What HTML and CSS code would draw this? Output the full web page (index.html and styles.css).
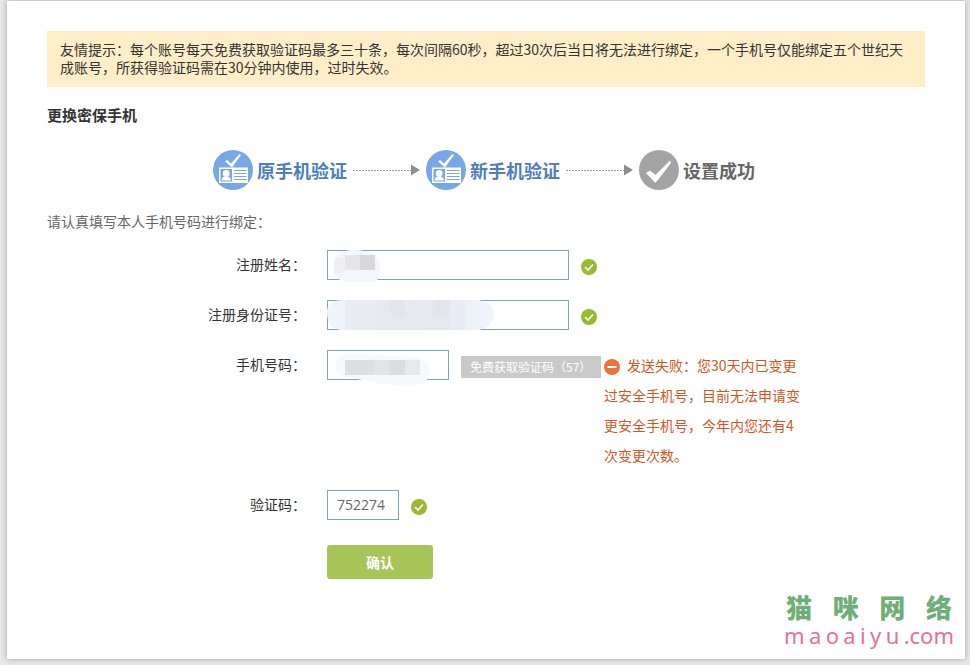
FILE: index.html
```
<!DOCTYPE html>
<html lang="zh-CN">
<head>
  <meta charset="UTF-8">
  <meta name="viewport" content="width=device-width, initial-scale=1.0">
  <title>更换密保手机</title>
  <link rel="stylesheet" href="styles.css">
</head>
<body>
  <!-- Shared icons -->
  <svg class="sprite" aria-hidden="true">
    <symbol id="icon-card" viewBox="0 0 40 40">
      <circle cx="20" cy="20" r="20" fill="#77a7e6"/>
      <path d="M12 11.500l2-1.500 4 3.500 8.500-9.500 1.500 1-9 12.500z" fill="#fff"/>
      <rect x="6" y="17.500" width="29" height="15.500" fill="#fff"/>
      <rect x="7.500" y="19" width="11.500" height="12.500" fill="#77a7e6"/>
      <circle cx="13.200" cy="23.500" r="3.400" fill="#fff"/>
      <path d="M8.500 30.500c0-3 2-4 4.700-4s4.700 1 4.700 4z" fill="#fff"/>
      <path d="M21 20.500h12.500M21 23.500h12.500M21 26.500h12.500M21 29.500h12.500" stroke="#77a7e6" stroke-width="1"/>
    </symbol>
    <symbol id="icon-done" viewBox="0 0 40 40">
      <circle cx="20" cy="20" r="20" fill="#a3a3a3"/>
      <path d="M7 23l4-2.500 5.500 4.500L31 10.500l1 2.500-15.500 20z" fill="#fff"/>
    </symbol>
    <symbol id="icon-arrow" viewBox="0 0 67 12">
      <path d="M0 6.500h58" stroke="#999" stroke-width="1" stroke-dasharray="2 1"/>
      <path d="M58 0.500v11l9-5.500z" fill="#8e8e8e"/>
    </symbol>
    <symbol id="icon-ok" viewBox="0 0 16 16">
      <circle cx="8" cy="8" r="8" fill="#99b933"/>
      <path d="M4 8l3 3 5-5.500" fill="none" stroke="#fff" stroke-width="1.600"/>
    </symbol>
    <symbol id="icon-error" viewBox="0 0 16 16">
      <circle cx="8" cy="8" r="8" fill="#ed7438"/>
      <path d="M3.500 8h9" stroke="#fff" stroke-width="2"/>
    </symbol>
  </svg>

  <main class="panel">
    <p class="notice">友情提示：每个账号每天免费获取验证码最多三十条，每次间隔60秒，超过30次后当日将无法进行绑定，一个手机号仅能绑定五个世纪天成账号，所获得验证码需在30分钟内使用，过时失效。</p>

    <h1 class="title">更换密保手机</h1>

    <div class="steps">
      <div class="step">
        <svg class="step-icon"><use href="#icon-card"/></svg>
        <span>原手机验证</span>
      </div>
      <svg class="step-arrow"><use href="#icon-arrow"/></svg>
      <div class="step">
        <svg class="step-icon"><use href="#icon-card"/></svg>
        <span>新手机验证</span>
      </div>
      <svg class="step-arrow"><use href="#icon-arrow"/></svg>
      <div class="step step-pending">
        <svg class="step-icon"><use href="#icon-done"/></svg>
        <span>设置成功</span>
      </div>
    </div>

    <p class="intro">请认真填写本人手机号码进行绑定：</p>

    <form class="form">
      <div class="row">
        <label class="label" for="name">注册姓名：</label>
        <div class="field">
          <input class="input" id="name" type="text">
          <svg class="mask" viewBox="0 0 170 36">
            <path d="M6 15c0-9 8-15 20-15 13 0 24 3 26 12 2 8 2 16-4 20H20C10 31 6 24 6 15z" fill="#f3f7fc"/>
            <path d="M8 8h10v15H8z" fill="#eeeff1"/>
            <path d="M18 5h15v15H18z" fill="#e5e5e7"/>
            <path d="M33 5h15v15H33z" fill="#d8d8da"/>
          </svg>
        </div>
        <svg class="status"><use href="#icon-ok"/></svg>
      </div>

      <div class="row">
        <label class="label" for="idcard">注册身份证号：</label>
        <div class="field">
          <input class="input" id="idcard" type="text">
          <svg class="mask" viewBox="0 0 170 36">
            <path d="M0 12C0 4 6 0 16 0h130c14 0 21 6 21 14s-6 16-20 16H16C4 30 0 22 0 12z" fill="#f0f4fc"/>
            <path d="M18 0h30v30H18z" fill="#e8ebf2"/>
            <path d="M48 0h45v30H48z" fill="#e6eaf0"/>
            <path d="M93 0h30v30H93z" fill="#e5e8ef"/>
            <path d="M123 0h15v30h-15z" fill="#e8ebf3"/>
            <path d="M138 0h15v30h-15z" fill="#edf1f8"/>
            <path d="M63 0h15v15H63zM108 0h15v15h-15z" fill="#e3e5ea"/>
          </svg>
        </div>
        <svg class="status"><use href="#icon-ok"/></svg>
      </div>

      <div class="row">
        <label class="label" for="phone">手机号码：</label>
        <div class="field">
          <input class="input input-phone" id="phone" type="text">
          <svg class="mask" viewBox="0 0 170 36">
            <path d="M9 15C10 6 18 3 32 4l56 3c10 2 14 8 14 16 0 9-7 13-22 13-22 0-36-5-56-8C12 27 8 22 9 15z" fill="#f6f9fd"/>
            <path d="M18 10h30v15H18z" fill="#dedfe1"/>
            <path d="M48 10h15v15H48z" fill="#e3e4e6"/>
            <path d="M63 10h15v15H63z" fill="#dcdde0"/>
            <path d="M78 10h15v15H78z" fill="#e7e8ea"/>
          </svg>
        </div>
        <button class="send-code" type="button" disabled>免费获取验证码（57）</button>
        <p class="error"><svg class="error-icon"><use href="#icon-error"/></svg>发送失败：您30天内已变更过安全手机号，目前无法申请变更安全手机号，今年内您还有4次变更次数。</p>
      </div>

      <div class="row">
        <label class="label" for="code">验证码：</label>
        <div class="field">
          <input class="input input-code" id="code" type="text" value="752274">
        </div>
        <svg class="status"><use href="#icon-ok"/></svg>
      </div>

      <div class="actions">
        <button class="submit" type="submit">确认</button>
      </div>
    </form>
  </main>

  <div class="brand">
    <div class="brand-name"><span>猫</span><span>咪</span><span>网</span><span>络</span></div>
    <div class="brand-url"><span>m</span><span>a</span><span>o</span><span>a</span><span>i</span><span>y</span><span>u</span><span>.com</span></div>
  </div>
</body>
</html>
```
FILE: styles.css
```
* {
  box-sizing: border-box;
}
body {
  margin: 0;
  padding: 1px 5px 6px 7px;
  background: #e9e9e9;
  color: #333;
  font-family: "Noto Sans CJK SC", "Open Sans", sans-serif;
  font-size: 14px;
}
p, h1 {
  margin: 0;
}
.sprite {
  position: absolute;
  width: 0;
  height: 0;
}
.panel {
  min-height: calc(100vh - 7px);
  padding: 30px 40px;
  background: #fff;
  box-shadow: 0 0 6px rgba(0, 0, 0, 0.3);
}

/* Top tip and heading */
.notice {
  padding: 9px 13px 11px;
  background: #ffeec8;
  line-height: 18px;
}
.title {
  margin-top: 17px;
  font-size: 15px;
  font-weight: bold;
  line-height: 22px;
}

/* Progress steps */
.steps {
  display: flex;
  align-items: center;
  gap: 6px;
  margin-top: 24px;
  padding-left: 166px;
}
.step {
  display: flex;
  align-items: center;
  gap: 4px;
  color: #4f7dbd;
  font-size: 18px;
  font-weight: bold;
  line-height: 24px;
}
.step-pending {
  color: #666;
}
.step-icon {
  width: 40px;
  height: 40px;
}
.step-arrow {
  width: 67px;
  height: 12px;
}
.intro {
  margin-top: 21px;
  color: #666;
  line-height: 20px;
}

/* Form */
.form {
  margin-top: 19px;
}
.row {
  display: flex;
  align-items: flex-start;
  margin-bottom: 20px;
}
.label {
  width: 259px;
  margin-right: 21px;
  line-height: 28px;
  text-align: right;
}
.field {
  position: relative;
  margin-right: 12px;
}
.input {
  display: block;
  width: 242px;
  height: 30px;
  padding: 0 9px 2px;
  border: 1px solid #7ba3bd;
  background: #fff;
  color: #666;
  font-family: "Open Sans", sans-serif;
  font-size: 14px;
}
.input-phone {
  width: 122px;
}
.input-code {
  width: 72px;
}
/* Hides the personal data inside a field */
.mask {
  position: absolute;
  top: 0;
  left: 0;
  width: 170px;
  height: 36px;
  pointer-events: none;
}
.status {
  width: 16px;
  height: 16px;
  margin-top: 9px;
}
.send-code {
  width: 140px;
  height: 22px;
  margin-top: 6px;
  padding: 0 0 0 9px;
  border: none;
  background: #c9c9c9;
  color: #fff;
  font-family: inherit;
  font-size: 12px;
  line-height: 22px;
  text-align: left;
}
.error {
  width: 200px;
  margin-left: 3px;
  color: #d2571f;
  line-height: 30px;
}
.error-icon {
  width: 16px;
  height: 16px;
  margin-right: 7px;
  vertical-align: -4px;
}
.actions {
  padding: 5px 0 0 280px;
}
.submit {
  width: 106px;
  height: 34px;
  border: none;
  border-radius: 3px;
  background: #a8c55a;
  color: #fff;
  font-family: inherit;
  font-size: 14px;
  font-weight: bold;
  cursor: pointer;
}

/* Site mark in the corner */
.brand {
  position: absolute;
  right: 16px;
  bottom: 16px;
  width: 170px;
}
.brand-name,
.brand-url {
  display: flex;
  justify-content: space-between;
  line-height: 28px;
}
.brand-name {
  padding: 0 2px;
  color: #6fae78;
  font-size: 26px;
  font-weight: 900;
}
.brand-url {
  color: #e8709a;
  font-family: "Noto Sans", sans-serif;
  font-size: 22px;
}
```
